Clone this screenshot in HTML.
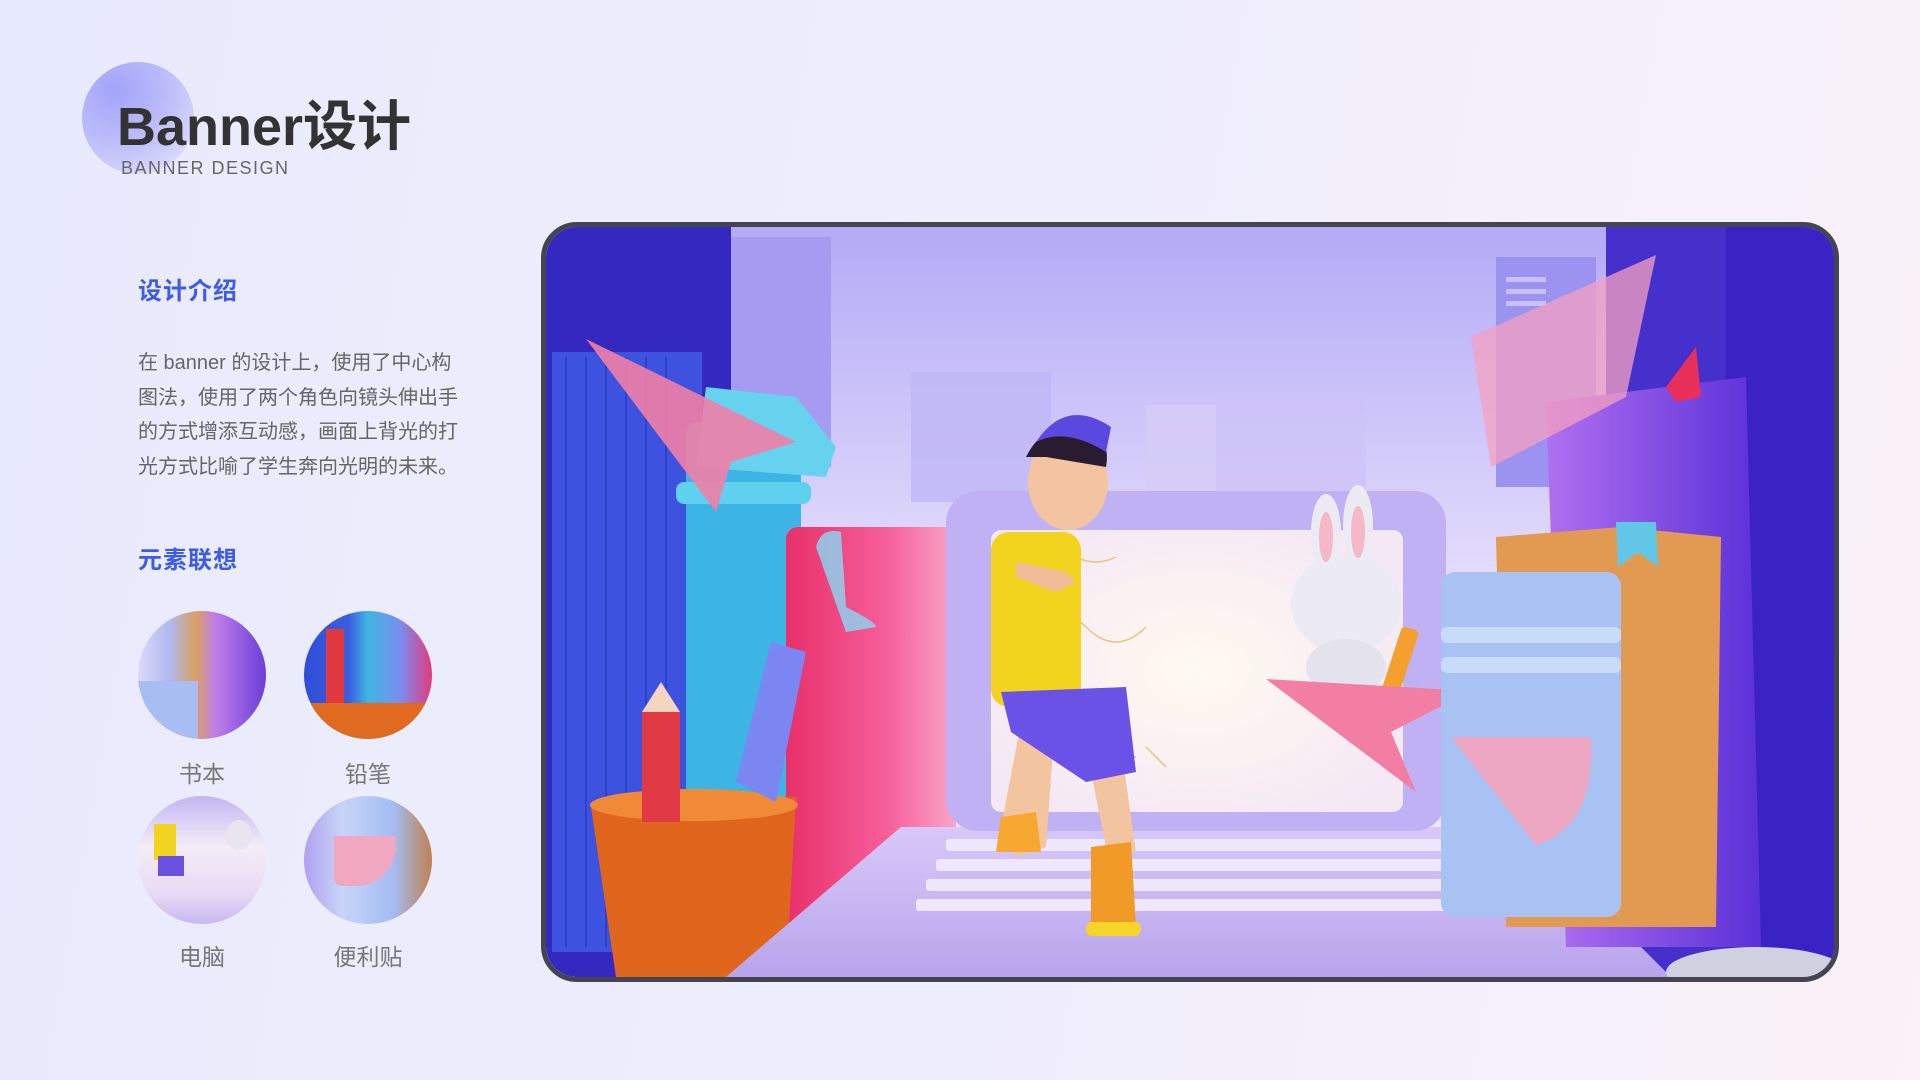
<!DOCTYPE html>
<html><head><meta charset="utf-8">
<style>
*{margin:0;padding:0;box-sizing:border-box}
body{width:1920px;height:1080px;overflow:hidden;position:relative;
background:linear-gradient(100deg,#e8eafd 0%,#eeeefc 50%,#f6f0fa 85%,#fbf1f6 100%);
font-family:"Liberation Sans","Noto Sans CJK SC",sans-serif}
.abs{position:absolute}
.circ{position:absolute;left:82px;top:62px;width:112px;height:112px;border-radius:50%;
background:radial-gradient(circle at 30% 25%,#a3a3fa 0%,#bcbcfa 45%,rgba(225,225,252,0.2) 100%)}
h1{position:absolute;left:117px;top:95px;font-size:54px;font-weight:bold;color:#333;line-height:1.2;
font-family:"Liberation Sans","Noto Sans CJK SC",sans-serif}
.sub{left:121px;top:158px;font-size:18px;color:#666;letter-spacing:1.5px}
.hd{left:138px;font-size:24px;font-weight:bold;color:#3e5be8;letter-spacing:1px}
.p{left:138px;top:346px;width:328px;font-size:20px;line-height:34.5px;color:#666}
.ic{position:absolute;width:128px;height:128px;border-radius:50%;overflow:hidden}
.lb{position:absolute;font-size:23px;color:#777;width:128px;text-align:center}
.frame{position:absolute;left:541px;top:222px;width:1298px;height:760px;border:5px solid #454552;border-radius:36px;overflow:hidden;background:#8a80f0}
</style></head><body>
<div class="circ"></div>
<h1>Banner设计</h1>
<div class="abs sub">BANNER DESIGN</div>
<div class="abs hd" style="top:271px">设计介绍</div>
<div class="abs p">在 banner 的设计上，使用了中心构图法，使用了两个角色向镜头伸出手的方式增添互动感，画面上背光的打光方式比喻了学生奔向光明的未来。</div>
<div class="abs hd" style="top:540px">元素联想</div>

<div class="ic" style="left:138px;top:611px;background:linear-gradient(90deg,#dcd8fa 0%,#b0b8f0 25%,#d9a060 45%,#c07ee8 60%,#6a3ed8 100%)">
 <div class="abs" style="left:0;top:70px;width:60px;height:58px;background:#a8bdf2"></div>
</div>
<div class="ic" style="left:304px;top:611px;background:linear-gradient(90deg,#2f4ed8 0%,#3a5ee0 35%,#3fb5e0 50%,#7a8ef0 75%,#e43a80 100%)">
 <div class="abs" style="left:22px;top:18px;width:18px;height:80px;background:#e03a40"></div>
 <div class="abs" style="left:0;top:92px;width:128px;height:40px;background:#e06a20"></div>
</div>
<div class="ic" style="left:138px;top:796px;background:linear-gradient(180deg,#c2b6f4 0%,#f4ecf6 40%,#e8dcf4 75%,#c8b8f0 100%)">
 <div class="abs" style="left:16px;top:28px;width:22px;height:36px;background:#f0d420"></div>
 <div class="abs" style="left:20px;top:60px;width:26px;height:20px;background:#6a50e0"></div>
 <div class="abs" style="left:88px;top:24px;width:26px;height:30px;border-radius:50%;background:#e8e4f0"></div>
</div>
<div class="ic" style="left:304px;top:796px;background:linear-gradient(90deg,#b0a0f0 0%,#c8d4f8 30%,#a4bcf2 70%,#c08050 100%)">
 <div class="abs" style="left:30px;top:40px;width:62px;height:50px;background:#f0a8c0;border-radius:0 0 40px 8px"></div>
</div>
<div class="lb" style="left:138px;top:755px">书本</div>
<div class="lb" style="left:304px;top:755px">铅笔</div>
<div class="lb" style="left:138px;top:938px">电脑</div>
<div class="lb" style="left:304px;top:938px">便利贴</div>

<div class="frame">
<svg width="1288" height="750" viewBox="0 0 1288 750" style="position:absolute;left:0;top:0">
<defs>
<linearGradient id="sky" x1="0" y1="0" x2="0" y2="1"><stop offset="0" stop-color="#b4aaf6"/><stop offset=".5" stop-color="#e6e0fc"/><stop offset="1" stop-color="#f2ecfc"/></linearGradient>
<linearGradient id="pink" x1="0" y1="0" x2="1" y2="0"><stop offset="0" stop-color="#e8306a"/><stop offset=".6" stop-color="#f65f9a"/><stop offset="1" stop-color="#f8a6c8"/></linearGradient>
<linearGradient id="purp" x1="0" y1="0" x2="1" y2="0"><stop offset="0" stop-color="#b070f0"/><stop offset="1" stop-color="#5a30d8"/></linearGradient>
<linearGradient id="base" x1="0" y1="0" x2="0" y2="1"><stop offset="0" stop-color="#d8c8f8"/><stop offset="1" stop-color="#b8a4ec"/></linearGradient>
<radialGradient id="glow" cx=".5" cy=".5" r=".6"><stop offset="0" stop-color="#fffaf0"/><stop offset="1" stop-color="#f4e8f4"/></radialGradient>
</defs>
<rect width="1288" height="750" fill="url(#sky)"/>
<rect x="185" y="10" width="100" height="230" fill="#a59cf2"/>
<rect x="365" y="145" width="140" height="130" fill="#bfb6f6" opacity=".8"/>
<rect x="600" y="178" width="70" height="90" fill="#d4ccf8" opacity=".8"/>
<rect x="670" y="170" width="150" height="100" fill="#ccc2f6" opacity=".7"/>
<rect x="950" y="30" width="100" height="230" fill="#9c92f0"/>
<g fill="#c8c0fa"><rect x="960" y="50" width="40" height="5"/><rect x="960" y="62" width="40" height="5"/><rect x="960" y="74" width="40" height="5"/></g>
<rect x="0" y="0" width="185" height="750" fill="#3428c0"/>
<rect x="1060" y="0" width="228" height="750" fill="#4630cc"/>
<rect x="1180" y="0" width="108" height="750" fill="#3a22c4"/>
<rect x="6" y="125" width="150" height="600" fill="#3e52e0"/>
<g stroke="#2f40c8" stroke-width="2">
<line x1="20" y1="130" x2="20" y2="720"/><line x1="40" y1="130" x2="40" y2="720"/><line x1="60" y1="130" x2="60" y2="720"/><line x1="80" y1="130" x2="80" y2="720"/><line x1="100" y1="130" x2="100" y2="720"/><line x1="120" y1="130" x2="120" y2="720"/></g>
<rect x="140" y="195" width="115" height="390" rx="10" fill="#3db4e6"/>
<rect x="130" y="255" width="135" height="22" rx="8" fill="#5fd0ee"/>
<path d="M160 160 L250 170 L290 220 L280 250 L150 240Z" fill="#66d2ee"/>
<rect x="240" y="300" width="170" height="420" rx="12" fill="url(#pink)"/>
<path d="M270 320 Q275 300 295 305 L300 380 Q330 395 330 400 L300 405Z" fill="#8ad8f2" opacity=".8"/>
<path d="M45 580 L250 570 L240 750 L70 750Z" fill="#e0661e"/>
<ellipse cx="148" cy="578" rx="104" ry="16" fill="#f08a36"/>
<rect x="96" y="485" width="38" height="110" fill="#e23a44"/>
<path d="M96 485 L115 455 L134 485Z" fill="#f4d6c0"/>
<path d="M190 555 L225 415 L260 425 L230 575Z" fill="#7c86f2"/>
<path d="M40 112 L250 215 L185 235 L170 285Z" fill="#f07ea6" opacity=".9"/>
<path d="M355 600 L975 600 L1125 750 L180 750Z" fill="url(#base)"/>
<g fill="#efe8fc">
<rect x="400" y="612" width="540" height="12" rx="3"/><rect x="390" y="632" width="560" height="12" rx="3"/><rect x="380" y="652" width="580" height="12" rx="3"/><rect x="370" y="672" width="600" height="12" rx="3"/></g>
<rect x="400" y="264" width="500" height="340" rx="32" fill="#c0b0f4"/>
<rect x="445" y="303" width="412" height="282" rx="10" fill="url(#glow)"/>
<g stroke="#e8b860" stroke-width="1.5" fill="none" opacity=".8">
<path d="M490 330 l20 0 m-10 0 l0 20 M530 330 q20 10 40 0 M480 400 q30 -30 60 0 q30 30 60 0 M500 480 q20 -10 40 0 q20 10 40 0 M560 530 l30 0 m10 -10 l20 20"/></g>
<path d="M480 470 L455 600 L470 630 L500 620 L510 480Z" fill="#f2c4a0"/>
<path d="M540 520 L560 620 L590 625 L575 520Z" fill="#f2c4a0"/>
<rect x="445" y="305" width="90" height="175" rx="18" fill="#f2d41e"/>
<path d="M455 465 L580 460 L590 545 L540 555 L465 505Z" fill="#6a52e6"/>
<path d="M455 590 L490 585 L495 625 L450 625Z" fill="#f6a830"/>
<path d="M545 620 L585 615 L590 700 L545 705Z" fill="#f29a28"/>
<rect x="540" y="695" width="55" height="14" rx="6" fill="#f6d428"/>
<ellipse cx="522" cy="255" rx="40" ry="48" fill="#f4c4a0"/>
<path d="M480 230 Q500 190 545 200 Q565 215 560 240 L500 230Z" fill="#2a1c30"/>
<path d="M490 215 Q520 170 565 200 L560 225 Q520 200 490 215Z" fill="#5a48e0"/>
<path d="M470 335 L520 345 L530 355 L510 365 L470 350Z" fill="#f2bc98"/>
<ellipse cx="800" cy="377" rx="55" ry="50" fill="#eceaf2"/>
<ellipse cx="780" cy="305" rx="15" ry="38" fill="#eceaf2"/><ellipse cx="812" cy="298" rx="15" ry="40" fill="#eceaf2"/>
<ellipse cx="780" cy="310" rx="7" ry="25" fill="#f4b8c8"/><ellipse cx="812" cy="305" rx="7" ry="26" fill="#f4b8c8"/>
<ellipse cx="800" cy="440" rx="40" ry="28" fill="#e4e2ec"/>
<rect x="845" y="400" width="18" height="70" rx="4" transform="rotate(18 854 435)" fill="#f4a030"/>
<path d="M720 452 L925 464 L845 505 L870 565Z" fill="#f27ea4"/>
<path d="M1000 175 L1200 150 L1215 720 L1020 720Z" fill="url(#purp)"/>
<path d="M1120 160 L1150 120 L1155 170 L1130 175Z" fill="#e8305a"/>
<path d="M950 310 L1075 300 L1175 310 L1170 700 L960 700Z" fill="#e29a52"/>
<path d="M1070 295 L1110 295 L1112 340 L1092 325 L1072 340Z" fill="#62c6e6"/>
<rect x="895" y="345" width="180" height="345" rx="14" fill="#a8c2f4"/>
<rect x="895" y="400" width="180" height="16" rx="6" fill="#c8dcfa"/>
<rect x="895" y="430" width="180" height="16" rx="6" fill="#c8dcfa"/>
<path d="M925 110 L1110 28 L1080 170 L945 240Z" fill="#f4a0c0" opacity=".75"/>
<path d="M905 510 L1045 510 Q1050 600 990 618 Z" fill="#f4a4bc" opacity=".9"/>
<ellipse cx="1210" cy="745" rx="90" ry="25" fill="#cfd0e0"/>
</svg>
</div>
</body></html>
